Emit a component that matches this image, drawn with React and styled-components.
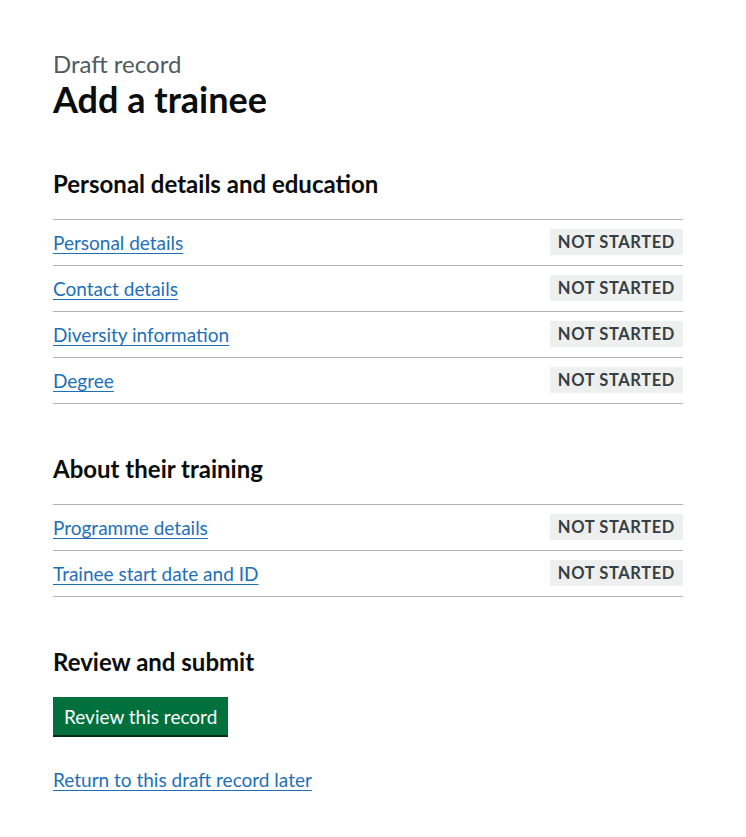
import styled, { createGlobalStyle } from "styled-components";

const GlobalStyle = createGlobalStyle`
  body {
    margin: 0;
    background: #fff;
    font-family: Lato, "Noto Sans", Arial, sans-serif;
    color: #0b0c0c;
    -webkit-font-smoothing: antialiased;
  }
`;

const Page = styled.main`
  width: 630px;
  padding: 49px 0 40px 53px;
`;

const Caption = styled.span`
  display: block;
  font-size: 24px;
  line-height: 30px;
  color: #505a5f;
`;

const Title = styled.h1`
  margin: 0 0 50px;
  font-size: 36px;
  line-height: 40px;
  font-weight: 700;
`;

const SectionTitle = styled.h2`
  margin: 0 0 20px;
  font-size: 24px;
  line-height: 30px;
  font-weight: 700;
`;

const TaskList = styled.ul`
  list-style: none;
  margin: 0 0 50px;
  padding: 0;
  border-bottom: 1px solid #b1b4b6;
`;

const TaskItem = styled.li`
  display: flex;
  align-items: center;
  justify-content: space-between;
  height: 45px;
  border-top: 1px solid #b1b4b6;
`;

const TextLink = styled.a`
  font-size: 19px;
  line-height: 25px;
  color: #1d70b8;
  text-decoration: underline;
  text-decoration-thickness: 1px;
  text-underline-offset: 0.16em;
  cursor: pointer;
`;

const Tag = styled.strong`
  display: inline-block;
  margin-top: -1px;
  padding: 5px 8px 4px;
  background: #eeefef;
  color: #383f43;
  font-size: 16.5px;
  line-height: 1;
  font-weight: 700;
  letter-spacing: 0.6px;
  text-transform: uppercase;
`;

const Button = styled.button`
  display: block;
  margin: 0 0 32px;
  padding: 8px 9px 7px;
  border: 2px solid transparent;
  border-radius: 0;
  background: #00703c;
  box-shadow: 0 2px 0 #002d18;
  color: #fff;
  font-family: inherit;
  font-size: 19px;
  line-height: 19px;
  cursor: pointer;
`;

const sections = [
  {
    title: "Personal details and education",
    tasks: ["Personal details", "Contact details", "Diversity information", "Degree"],
  },
  {
    title: "About their training",
    tasks: ["Programme details", "Trainee start date and ID"],
  },
];

export default function App() {
  return (
    <>
      <GlobalStyle />
      <Page>
        <Caption>Draft record</Caption>
        <Title>Add a trainee</Title>
        {sections.map((section) => (
          <section key={section.title}>
            <SectionTitle>{section.title}</SectionTitle>
            <TaskList>
              {section.tasks.map((task) => (
                <TaskItem key={task}>
                  <TextLink href="#">{task}</TextLink>
                  <Tag>Not started</Tag>
                </TaskItem>
              ))}
            </TaskList>
          </section>
        ))}
        <SectionTitle>Review and submit</SectionTitle>
        <Button type="button">Review this record</Button>
        <TextLink href="#">Return to this draft record later</TextLink>
      </Page>
    </>
  );
}
